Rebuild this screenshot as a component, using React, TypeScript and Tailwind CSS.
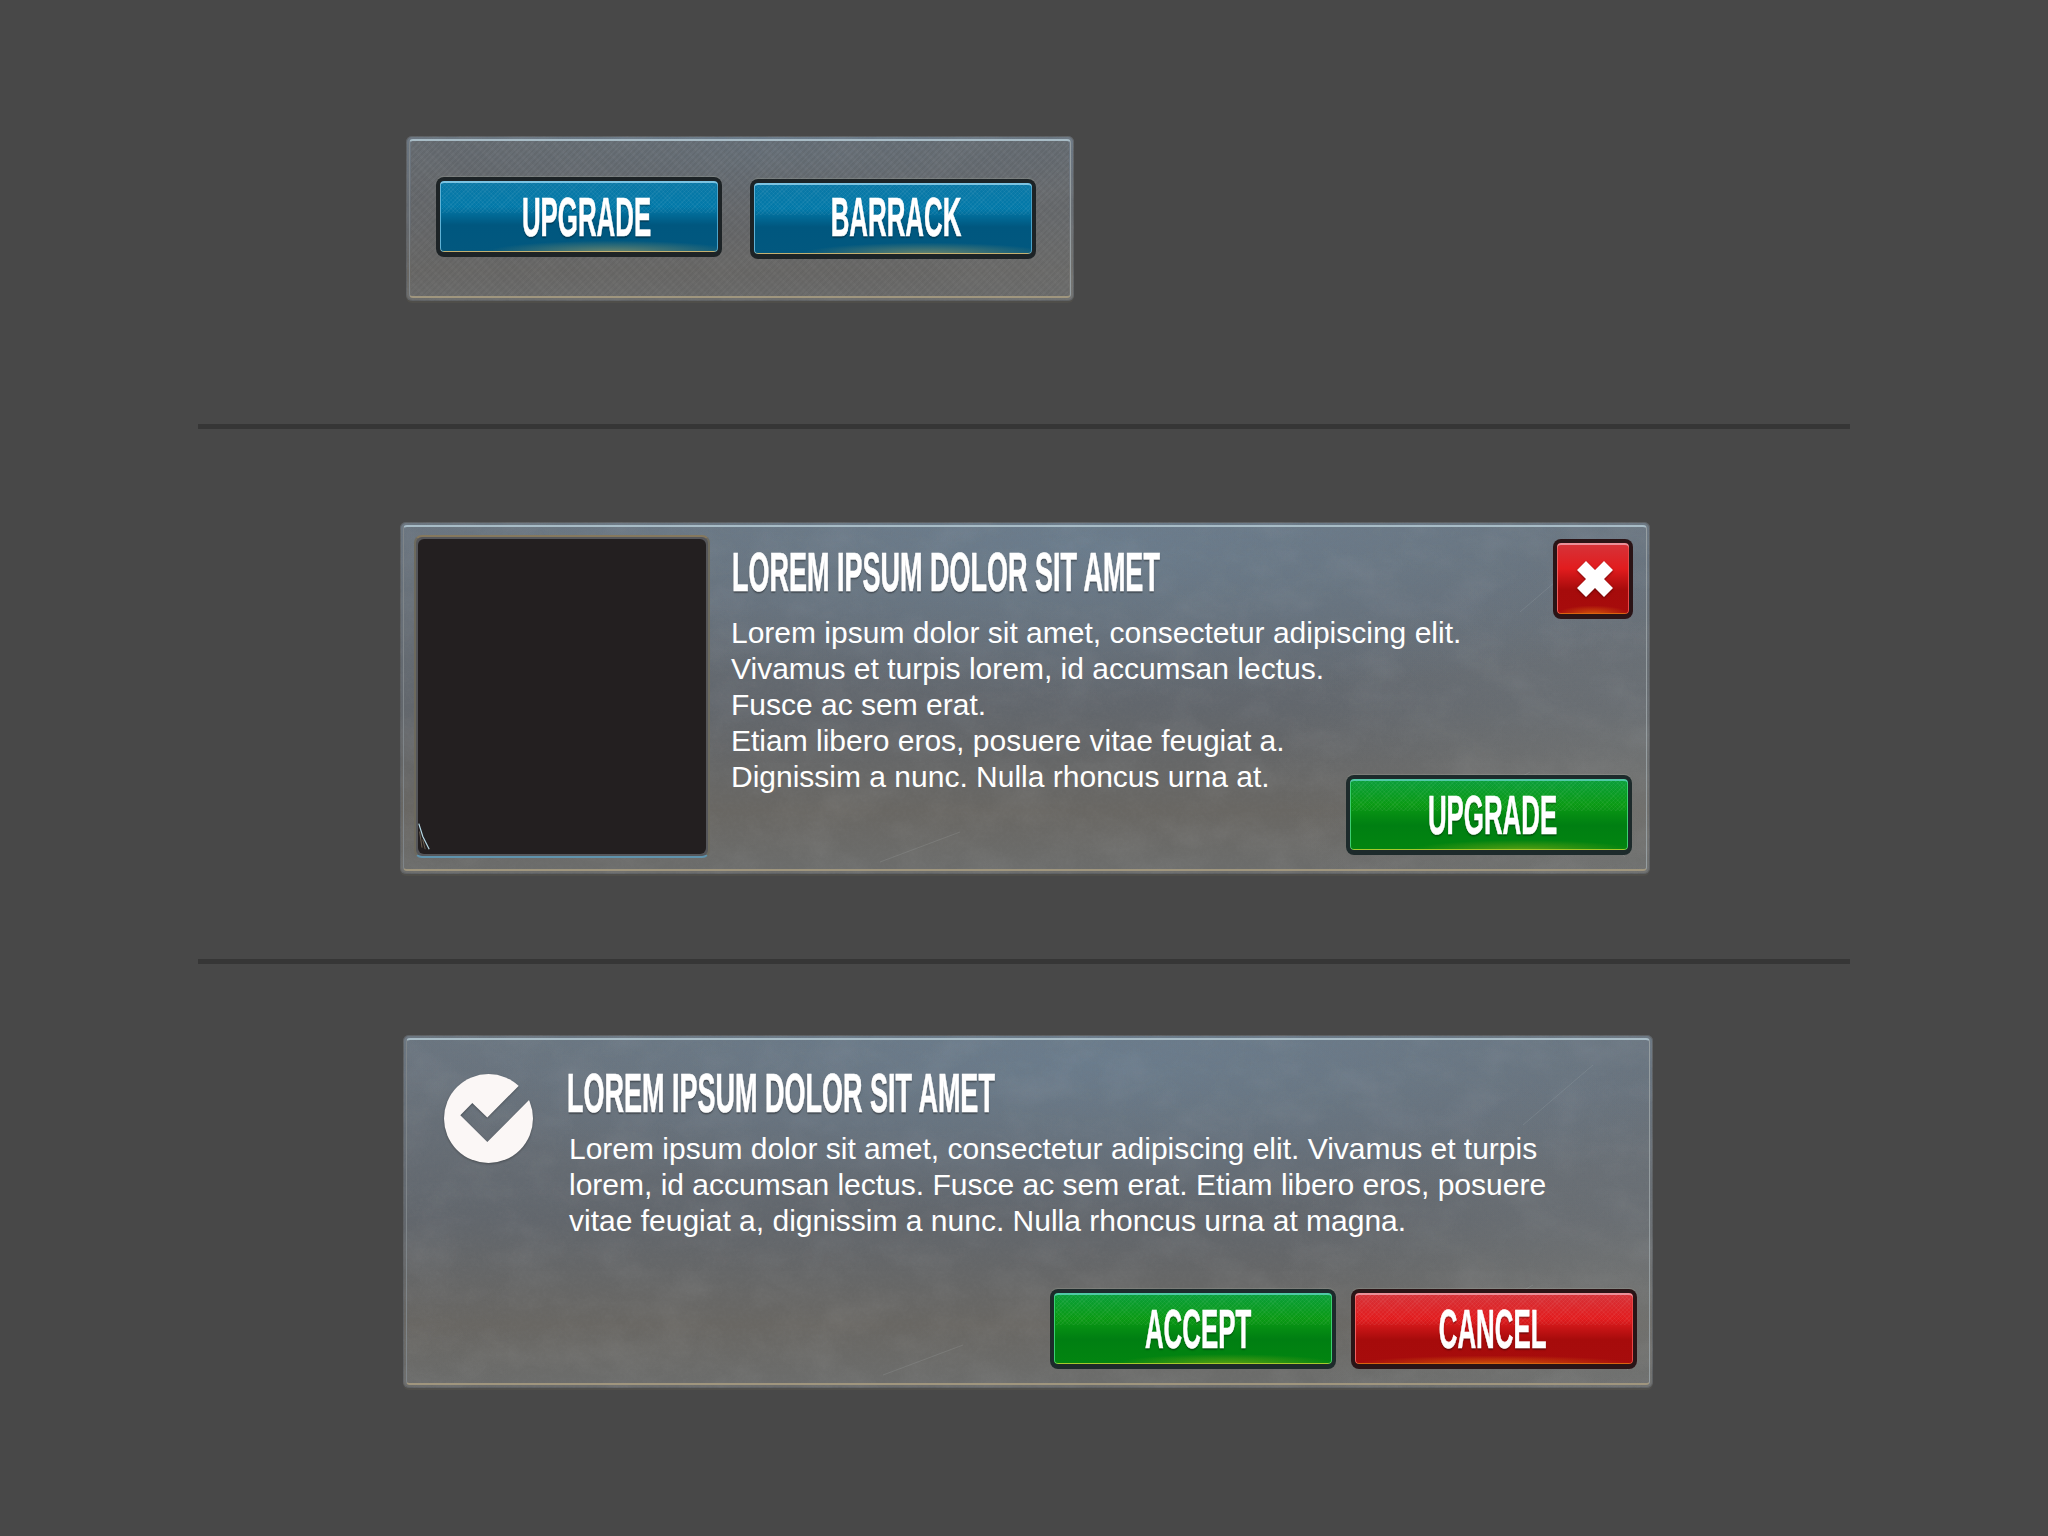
const sans = "font-['Liberation_Sans',Arial,sans-serif]";

const lines = [
  "Lorem ipsum dolor sit amet, consectetur adipiscing elit.",
  "Vivamus et turpis lorem, id accumsan lectus.",
  "Fusce ac sem erat.",
  "Etiam libero eros, posuere vitae feugiat a.",
  "Dignissim a nunc. Nulla rhoncus urna at.",
];

const faces = {
  blue: "bg-[radial-gradient(ellipse_45%_16%_at_62%_100%,rgba(205,175,90,0.5),transparent),linear-gradient(180deg,#0b78a6_0%,#0279a9_36%,#00577f_62%,#02587f_100%)] shadow-[inset_0_2px_0_#7cc3e2,inset_1px_0_0_#5fb2d6,inset_-1px_0_0_#4ba2c8,inset_0_-1px_0_#c4b070]",
  green: "bg-[radial-gradient(ellipse_40%_14%_at_62%_100%,rgba(190,190,20,0.45),transparent),linear-gradient(180deg,#0a9f3c_0%,#0a9a14_36%,#007f12_65%,#028510_100%)] shadow-[inset_0_2px_0_#4fc9a6,inset_1px_0_0_#3ccf72,inset_-1px_0_0_#3ccf72,inset_0_-1px_0_#a6c92c]",
  red: "bg-[radial-gradient(ellipse_50%_12%_at_50%_100%,rgba(230,120,10,0.65),transparent),linear-gradient(180deg,#d5343a_0%,#e21c1e_36%,#a60b0b_66%,#a70c0c_100%)] shadow-[inset_0_2px_0_#eb8f98,inset_1px_0_0_#ee6060,inset_-1px_0_0_#e84848,inset_0_-1px_0_#d86410]",
};

const rims = {
  blue: "bg-[#1d2326]",
  green: "bg-[#1d2a2b]",
  red: "bg-[#2a1416]",
};

// worn metal: fine grain, soft blotches and a few scratches
function Grunge({ id }: { id: string }) {
  return (
    <svg className="pointer-events-none absolute inset-0 h-full w-full rounded-[6px]">
      <filter id={`${id}-grain`}>
        <feTurbulence type="fractalNoise" baseFrequency="0.3" numOctaves="4" seed="7" />
        <feColorMatrix values="0 0 0 0 0.2 0 0 0 0 0.2 0 0 0 0 0.2 1.8 0 0 0 -0.6" />
      </filter>
      <filter id={`${id}-blotch`}>
        <feTurbulence type="fractalNoise" baseFrequency="0.02 0.03" numOctaves="4" seed="3" />
        <feColorMatrix values="0 0 0 0 0.8 0 0 0 0 0.8 0 0 0 0 0.8 1.6 0 0 0 -0.6" />
      </filter>
      <rect width="100%" height="100%" filter={`url(#${id}-grain)`} opacity="0.14" />
      <rect width="100%" height="100%" filter={`url(#${id}-blotch)`} opacity="0.07" />
      <g stroke="#d8dde0" strokeWidth="1" opacity="0.12" fill="none">
        <path d="M1120 90 L1190 30 M1040 300 L1130 250 M1180 290 L1225 335 M480 340 L560 310" />
      </g>
    </svg>
  );
}

function Panel({ id, className, children }: { id: string; className: string; children: React.ReactNode }) {
  return (
    <div className={`relative rounded-[6px] bg-[radial-gradient(ellipse_55%_42%_at_55%_8%,rgba(108,135,160,0.45),transparent),radial-gradient(ellipse_30%_60%_at_100%_70%,rgba(140,145,145,0.28),transparent),linear-gradient(180deg,#6b7681_0%,#62676d_52%,#696763_82%,#6c6d6c_100%)] shadow-[inset_0_0_0_1px_#5d6063,0_2px_0_#4f4e4a] ${className}`}>
      <Grunge id={id} />
      <div className="pointer-events-none absolute inset-[3px] rounded-[4px] border border-b-2 border-t-2 border-b-[#a0967e] border-l-[#7f8589] border-r-[#969ea1] border-t-[#a8bcc6]" />
      {children}
    </div>
  );
}

function GameButton({ color, label, className }: { color: "blue" | "green" | "red"; label: string; className: string }) {
  return (
    <div className={`h-[80px] w-[286px] shrink-0 rounded-[8px] p-[4px] pb-[5px] shadow-[0_-1px_1px_rgba(210,215,190,0.2)] ${rims[color]}`}>
      <div className={`relative flex h-full items-center justify-center rounded-[4px] ${faces[color]}`}>
        <div className="absolute inset-x-[2px] top-[2px] h-[30px] bg-[repeating-linear-gradient(135deg,rgba(255,255,255,0.05)_0_1px,transparent_1px_3px),repeating-linear-gradient(45deg,rgba(255,255,255,0.04)_0_1px,transparent_1px_3px)]" />
        <span className={`relative whitespace-nowrap text-[55px] font-bold leading-[56px] [-webkit-text-stroke:0.7px_white] [text-shadow:0_2px_2px_rgba(0,0,0,0.35)] scale-x-[0.47] ${sans} ${className}`}>{label}</span>
      </div>
    </div>
  );
}

function Title({ className }: { className: string }) {
  return (
    <h2 className={`h-[56px] w-[427px] whitespace-nowrap ${className}`}>
      <span className={`inline-block origin-left scale-x-[0.482] text-[56px] font-bold leading-[56px] [-webkit-text-stroke:0.7px_white] [text-shadow:0_2px_2px_rgba(0,0,0,0.35)] ${sans}`}>
        LOREM IPSUM DOLOR SIT AMET
      </span>
    </h2>
  );
}

function CheckBadge() {
  return (
    <svg viewBox="0 0 89 89" className="h-[89px] w-[89px] shrink-0 drop-shadow-[0_1px_1px_rgba(0,0,0,0.3)]">
      <mask id="check-cut">
        <circle cx="44.5" cy="44.5" r="44.5" fill="white" />
        <polygon points="16.3,41.3 28.3,29 43.3,43.5 80,6.5 95,16 43.3,68" fill="black" />
      </mask>
      <rect width="89" height="89" fill="#fbf7f6" mask="url(#check-cut)" />
    </svg>
  );
}

export default function App() {
  return (
    <div className="flex min-h-[1536px] w-[2048px] flex-col bg-[#484848] pt-[136px] text-white">
      <Panel id="grunge-a" className="ml-[406px] flex h-[165px] w-[668px] items-start gap-[28px] pl-[30px]">
        <div className="absolute inset-[5px] rounded-[3px] bg-[linear-gradient(180deg,rgba(100,100,100,0.45),rgba(106,106,106,0.6)),repeating-linear-gradient(135deg,rgba(0,0,0,0.09)_0_2px,transparent_2px_4px),repeating-linear-gradient(45deg,rgba(255,255,255,0.04)_0_3px,transparent_3px_8px)]" />
        <div className="relative mt-[41px]"><GameButton color="blue" label="UPGRADE" className="ml-[16px]" /></div>
        <div className="relative mt-[43px]"><GameButton color="blue" label="BARRACK" className="mb-[4px] ml-[6px]" /></div>
      </Panel>

      <div className="ml-[198px] mt-[123px] h-[5px] w-[1652px] bg-[#363636]" />

      <Panel id="grunge-b" className="ml-[400px] mt-[93px] flex h-[352px] w-[1250px]">
        <div className="relative ml-[14px] mt-[13px] h-[323px] w-[296px] shrink-0 rounded-[8px] border-2 border-b-[#5f93ad] border-l-[#6d6a5e] border-r-[#6d6a5e] border-t-[#85785d] bg-[#55565a] p-[2px] pt-[2px]">
          <div className="h-full rounded-[6px] bg-[#231f20]" />
          <svg viewBox="0 0 20 40" className="absolute bottom-[2px] left-[2px] h-[32px] w-[16px]">
            <path d="M1 2 L6 18 L14 34" fill="none" stroke="#b5d8e4" strokeWidth="1.5" />
            <path d="M2 12 L5 32 M6 22 L9 34" fill="none" stroke="#7d6f5a" strokeWidth="1" />
          </svg>
        </div>
        <div className="relative ml-[20px] min-w-0 flex-1 pt-[22px]">
          <Title className="mb-[15px] ml-[2px]" />
          <div className={`ml-[1px] text-[30px] leading-[36px] ${sans}`}>
            {lines.map((line) => (
              <p key={line} className="whitespace-nowrap">{line}</p>
            ))}
          </div>
        </div>
        <div className="relative mb-[19px] mr-[17px] mt-[17px] flex flex-col items-end justify-between">
          <div className={`h-[80px] w-[80px] rounded-[8px] p-[4px] pb-[5px] ${rims.red}`}>
            <div className={`flex h-full items-center justify-center rounded-[4px] ${faces.red}`}>
              <svg viewBox="0 0 36 36" className="h-[36px] w-[36px] translate-x-[2px] drop-shadow-[0_1px_1px_rgba(60,0,0,0.6)]">
                <polygon fill="white" points="9,0 18,9 27,0 36,9 27,18 36,27 27,36 18,27 9,36 0,27 9,18 0,9" />
              </svg>
            </div>
          </div>
          <div className="mr-[1px]"><GameButton color="green" label="UPGRADE" className="ml-[8px]" /></div>
        </div>
      </Panel>

      <div className="ml-[198px] mt-[85px] h-[5px] w-[1652px] bg-[#363636]" />

      <Panel id="grunge-c" className="ml-[403px] mt-[71px] flex h-[353px] w-[1250px] flex-col">
        <div className="relative flex items-start pl-[41px] pt-[30px]">
          <div className="mt-[9px]"><CheckBadge /></div>
          <div className="ml-[34px]">
            <Title className="mb-[10px]" />
            <p className={`ml-[2px] w-[990px] text-[30px] leading-[36px] ${sans}`}>
              Lorem ipsum dolor sit amet, consectetur adipiscing elit. Vivamus et turpis lorem, id accumsan lectus. Fusce ac sem erat. Etiam libero eros, posuere vitae feugiat a, dignissim a nunc. Nulla rhoncus urna at magna.
            </p>
          </div>
        </div>
        <div className="relative mt-auto flex justify-end gap-[15px] pb-[19px] pr-[16px]">
          <GameButton color="green" label="ACCEPT" className="ml-[10px]" />
          <GameButton color="red" label="CANCEL" className="mr-[2px]" />
        </div>
      </Panel>
    </div>
  );
}
